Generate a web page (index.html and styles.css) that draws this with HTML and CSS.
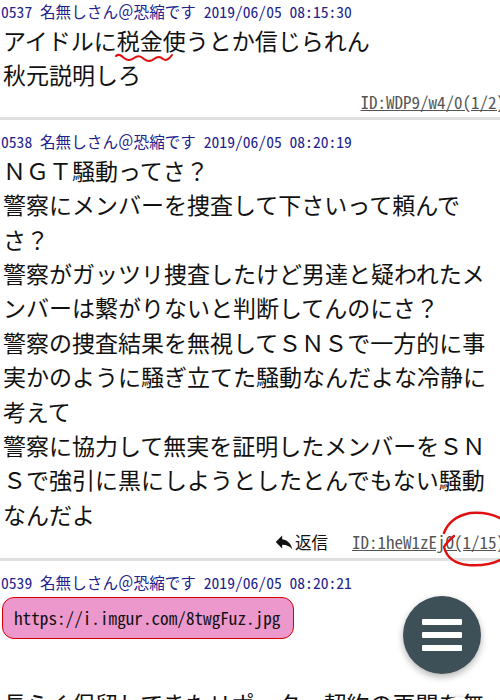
FILE: index.html
```html
<!DOCTYPE html>
<html lang="ja">
<head>
    <meta charset="UTF-8">
    <meta name="viewport" content="width=device-width, initial-scale=1.0">
    <title>スレッド</title>
    <link rel="stylesheet" href="styles.css">
</head>
<body>
    <div class="thread">
        <article class="post">
            <div class="post-head"><span class="half">0537 </span>名無しさん＠恐縮です<span class="half"> 2019/06/05 08:15:30</span></div>
            <div class="post-body">アイドルに<span class="mark">税金<svg class="wavy" width="60" height="12" viewBox="0 0 60 12"><path d="M1 4 Q4 1 9 6 Q14 10 19 6 Q24 2 29 7 Q34 11 39 7 Q44 3 48 7 Q52 10 57 3" fill="none" stroke="#e01010" stroke-width="2" stroke-linecap="round"/></svg></span>使うとか信じられん<br>秋元説明しろ</div>
            <div class="post-foot">
                <a class="post-id">ID:WDP9/w4/0(1/2)</a>
            </div>
        </article>

        <article class="post">
            <div class="post-head"><span class="half">0538 </span>名無しさん＠恐縮です<span class="half"> 2019/06/05 08:20:19</span></div>
            <div class="post-body">ＮＧＴ騒動ってさ？<br>警察にメンバーを捜査して下さいって頼んでさ？<br>警察がガッツリ捜査したけど男達と疑われたメンバーは繋がりないと判断してんのにさ？<br>警察の捜査結果を無視してＳＮＳで一方的に事実かのように騒ぎ立てた騒動なんだよな冷静に考えて<br>警察に協力して無実を証明したメンバーをＳＮＳで強引に黒にしようとしたとんでもない騒動なんだよ</div>
            <div class="post-foot">
                <span class="reply"><svg width="22" height="22" viewBox="0 0 24 24"><path d="M10 9V5l-7 7 7 7v-4.1c5 0 8.5 1.6 11 5.1-1-5-4-10-11-11z" fill="#111"/></svg>返信</span>
                <a class="post-id">ID:1heW1zEj<span class="circled">O(1/15)<svg class="ring" width="80" height="60" viewBox="0 0 80 60"><path d="M16 27 Q9 33 6 38 Q10 54 30 56 Q60 58 74 42 Q80 26 70 14 Q54 2 32 4 Q12 8 6 24" fill="none" stroke="#e01010" stroke-width="2.4" stroke-linecap="round"/></svg></span></a>
            </div>
        </article>

        <article class="post">
            <div class="post-head"><span class="half">0539 </span>名無しさん＠恐縮です<span class="half"> 2019/06/05 08:20:21</span></div>
            <div class="link-box">https://i.imgur.com/8twgFuz.jpg</div>
            <div class="post-body post-body-after">長らく保留してきたリポーター契約の再開を無事に</div>
        </article>
    </div>

    <div class="fab"><span></span><span></span><span></span></div>
    <div class="fab-mini"></div>
</body>
</html>
```

FILE: styles.css
```css
body {
    margin: 0;
    background: #fff;
    color: #111;
    font-family: "Noto Sans CJK JP", sans-serif;
    overflow: hidden;
}

.thread {
    margin-top: -10px;
}

.post {
    padding: 11px 3px 5px;
    border-bottom: 3px solid #e0e0e0;
}

.post-head {
    margin-left: -2px;
    font-size: 15.6px;
    line-height: 20px;
    color: #22228c;
    white-space: nowrap;
}

.post-head .half {
    white-space: pre;
    font-feature-settings: "hwid";
}

.post-body {
    margin-top: 2px;
    font-size: 23px;
    line-height: 34.4px;
}

.mark {
    position: relative;
}

.wavy {
    position: absolute;
    left: -2px;
    bottom: -7px;
}

.post-foot {
    display: flex;
    justify-content: flex-end;
    align-items: center;
    gap: 24px;
    margin-right: -8px;
    line-height: 20px;
    white-space: nowrap;
}

.post-id {
    font-size: 17px;
    color: #555;
    text-decoration: underline;
    font-feature-settings: "hwid";
}

.circled {
    position: relative;
}

.ring {
    position: absolute;
    left: -8px;
    top: -20px;
}

.reply {
    display: flex;
    align-items: center;
    font-size: 16.5px;
}

.link-box {
    display: inline-block;
    margin: 5px 0 0 -1px;
    padding: 0 11px;
    width: 268px;
    height: 40px;
    line-height: 40px;
    background: #ec98cc;
    border: 1.5px solid #d40000;
    border-radius: 12px;
    font-size: 17.2px;
    font-feature-settings: "hwid";
}

.post-body-after {
    margin-top: 47px;
}

.fab {
    position: fixed;
    left: 403px;
    top: 596px;
    width: 78px;
    height: 78px;
    border-radius: 50%;
    background: #3d4f57;
    box-shadow: 0 3px 7px rgba(0, 0, 0, 0.3);
    display: flex;
    flex-direction: column;
    justify-content: center;
    align-items: center;
    gap: 7px;
}

.fab span {
    width: 40px;
    height: 6px;
    background: #fff;
    border-radius: 1px;
}

.fab-mini {
    position: fixed;
    left: 440px;
    top: 697px;
    width: 36px;
    height: 36px;
    border-radius: 50%;
    background: #fff;
    box-shadow: 0 0 4px rgba(0, 0, 0, 0.2);
}
```
